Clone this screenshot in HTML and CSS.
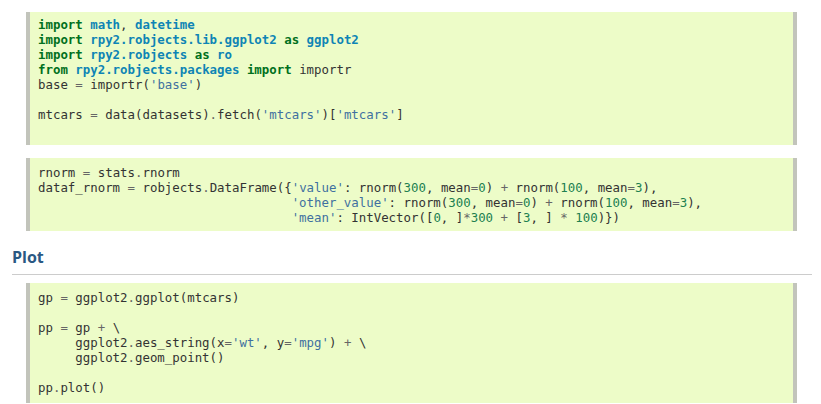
FILE: index.html
```html
<!DOCTYPE html>
<html>
<head>
<meta charset="utf-8">
<link rel="stylesheet" href="styles.css">
</head>
<body>
<div class="page">
<div class="highlight first">
<div class="code">
<div class="ln"><span class="k">import</span> <span class="nn">math</span>, <span class="nn">datetime</span></div>
<div class="ln"><span class="k">import</span> <span class="nn">rpy2.robjects.lib.ggplot2</span> <span class="k">as</span> <span class="nn">ggplot2</span></div>
<div class="ln"><span class="k">import</span> <span class="nn">rpy2.robjects</span> <span class="k">as</span> <span class="nn">ro</span></div>
<div class="ln"><span class="k">from</span> <span class="nn">rpy2.robjects.packages</span> <span class="k">import</span> <span>importr</span></div>
<div class="ln"><span>base</span> <span class="o">=</span> <span>importr(</span><span class="s">'base'</span><span>)</span></div>
<div class="ln blank"></div>
<div class="ln"><span>mtcars</span> <span class="o">=</span> <span>data(datasets)</span><span class="o">.</span><span>fetch(</span><span class="s">'mtcars'</span><span>)[</span><span class="s">'mtcars'</span><span>]</span></div>
</div>
</div>

<div class="highlight second">
<div class="code">
<div class="ln"><span>rnorm</span> <span class="o">=</span> <span>stats</span><span class="o">.</span><span>rnorm</span></div>
<div class="ln"><span>dataf_rnorm</span> <span class="o">=</span> <span>robjects</span><span class="o">.</span><span>DataFrame({</span><span class="s">'value'</span><span>: rnorm(</span><span class="mi">300</span><span>, mean</span><span class="o">=</span><span class="mi">0</span><span>)</span> <span class="o">+</span> <span>rnorm(</span><span class="mi">100</span><span>, mean</span><span class="o">=</span><span class="mi">3</span><span>),</span></div>
<div class="ln"><span class="ind34"></span><span class="s">'other_value'</span><span>: rnorm(</span><span class="mi">300</span><span>, mean</span><span class="o">=</span><span class="mi">0</span><span>)</span> <span class="o">+</span> <span>rnorm(</span><span class="mi">100</span><span>, mean</span><span class="o">=</span><span class="mi">3</span><span>),</span></div>
<div class="ln"><span class="ind34"></span><span class="s">'mean'</span><span>: IntVector([</span><span class="mi">0</span><span>, ]</span><span class="o">*</span><span class="mi">300</span> <span class="o">+</span> <span>[</span><span class="mi">3</span><span>, ]</span> <span class="o">*</span> <span class="mi">100</span><span>)})</span></div>
</div>
</div>

<h2 class="section-title">Plot</h2>

<div class="highlight last">
<div class="code">
<div class="ln"><span>gp</span> <span class="o">=</span> <span>ggplot2</span><span class="o">.</span><span>ggplot(mtcars)</span></div>
<div class="ln blank"></div>
<div class="ln"><span>pp</span> <span class="o">=</span> <span>gp</span> <span class="o">+</span> <span>\</span></div>
<div class="ln"><span class="ind5"></span><span>ggplot2</span><span class="o">.</span><span>aes_string(x</span><span class="o">=</span><span class="s">'wt'</span><span>, y</span><span class="o">=</span><span class="s">'mpg'</span><span>)</span> <span class="o">+</span> <span>\</span></div>
<div class="ln"><span class="ind5"></span><span>ggplot2</span><span class="o">.</span><span>geom_point()</span></div>
<div class="ln blank"></div>
<div class="ln"><span>pp</span><span class="o">.</span><span>plot()</span></div>
</div>
</div>
</div>
</body>
</html>
```
FILE: styles.css
```css
html, body {
  margin: 0;
  padding: 0;
  background: #ffffff;
}

.page {
  width: 800px;
  padding: 12px 0 0 12px;
  font-family: "Open Sans", "DejaVu Sans", sans-serif;
}

.highlight {
  margin: 0 15px 13px 14px;
  background: #edfcc8;
  border-left: 4px solid #c2c4bb;
  border-right: 4px solid #c2c4bb;
}

.code {
  padding: 7px 8px 8px 8px;
  font-family: "DejaVu Sans Mono", "Liberation Mono", monospace;
  font-size: 12.4px;
  line-height: 15px;
  color: #333333;
}

.ln {
  height: 15px;
  white-space: pre;
}

.ind34 {
  display: inline-block;
  width: 34ch;
}

.ind5 {
  display: inline-block;
  width: 5ch;
}

.highlight.first .code {
  padding-top: 5px;
  padding-bottom: 23px;
}

.highlight.second .code {
  padding-top: 7px;
  padding-bottom: 6px;
}

.highlight.last {
  margin-bottom: 0;
}

.k { color: #007020; font-weight: bold; }
.nn { color: #0e84b5; font-weight: bold; }
.s { color: #4070a0; }
.mi { color: #208050; }
.o { color: #666666; }

.section-title {
  margin: 0 0 8px 0;
  padding: 2px 0 6px 0;
  font-size: 16px;
  line-height: 22px;
  font-weight: bold;
  color: #2a5883;
  border-bottom: 1px solid #cccccc;
}
```
